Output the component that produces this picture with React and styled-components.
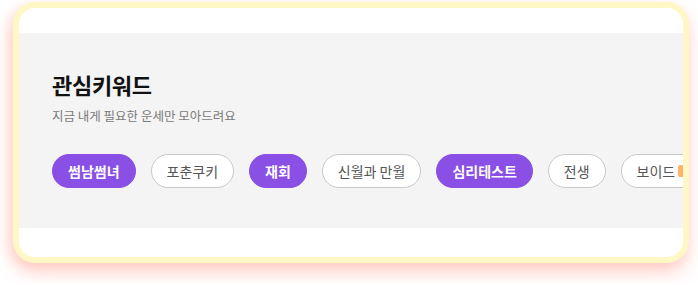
import styled, { createGlobalStyle } from "styled-components"

const GlobalStyle = createGlobalStyle`
body {
  margin: 0;
  background: #ffffff;
  font-family: "Noto Sans CJK KR", "Noto Sans", sans-serif;
}
`

const Page = styled.div`
padding: 2px 9px 20px 13px;
`

const Card = styled.div`
box-sizing: border-box;
width: 676px;
height: 261px;
border: 6px solid #fff8c6;
border-radius: 22px;
background: #ffffff;
box-shadow: 0 10px 18px rgba(255, 130, 110, 0.3), -5px 4px 12px rgba(255, 140, 120, 0.2);
overflow: hidden;
padding-top: 25px;
`

const Section = styled.section`
height: 195px;
background: #f4f4f4;
padding: 36px 0 0 33px;
box-sizing: border-box;
`

const Title = styled.h2`
margin: 0;
font-size: 22px;
font-weight: 700;
color: #111;
line-height: 30px;
letter-spacing: -0.3px;
`

const Sub = styled.p`
margin: 8px 0 0;
font-size: 12.5px;
color: #7a7a7a;
line-height: 18px;
`

const ChipRow = styled.div`
display: flex;
gap: 15px;
margin-top: 29px;
white-space: nowrap;
`

const Chip = styled.span`
box-sizing: border-box;
display: inline-flex;
align-items: center;
height: 34px;
padding: 0 15px;
border-radius: 17px;
font-size: 14px;
font-weight: ${p => (p.active ? 700 : 400)};
color: ${p => (p.active ? "#ffffff" : "#555555")};
background: ${p => (p.active ? "#8a4fe4" : "#ffffff")};
border: 1px solid ${p => (p.active ? "#8a4fe4" : "#c9c9c9")};
flex-shrink: 0;
`

const Badge = styled.span`
display: inline-block;
width: 10px;
height: 12px;
margin-left: 3px;
border-radius: 2px;
background: #ffb36b;
`

const keywords = [
    { label: "썸남썸녀", active: true },
    { label: "포춘쿠키" },
    { label: "재회", active: true },
    { label: "신월과 만월" },
    { label: "심리테스트", active: true },
    { label: "전생" },
    { label: "보이드", badge: true },
]

function App() {
    return (
        <Page>
            <GlobalStyle />
            <Card>
                <Section>
                    <Title>관심키워드</Title>
                    <Sub>지금 내게 필요한 운세만 모아드려요</Sub>
                    <ChipRow>
                        {keywords.map(k => (
                            <Chip key={k.label} active={k.active}>
                                {k.label}
                                {k.badge && <Badge />}
                            </Chip>
                        ))}
                    </ChipRow>
                </Section>
            </Card>
        </Page>
    )
}

export default App
